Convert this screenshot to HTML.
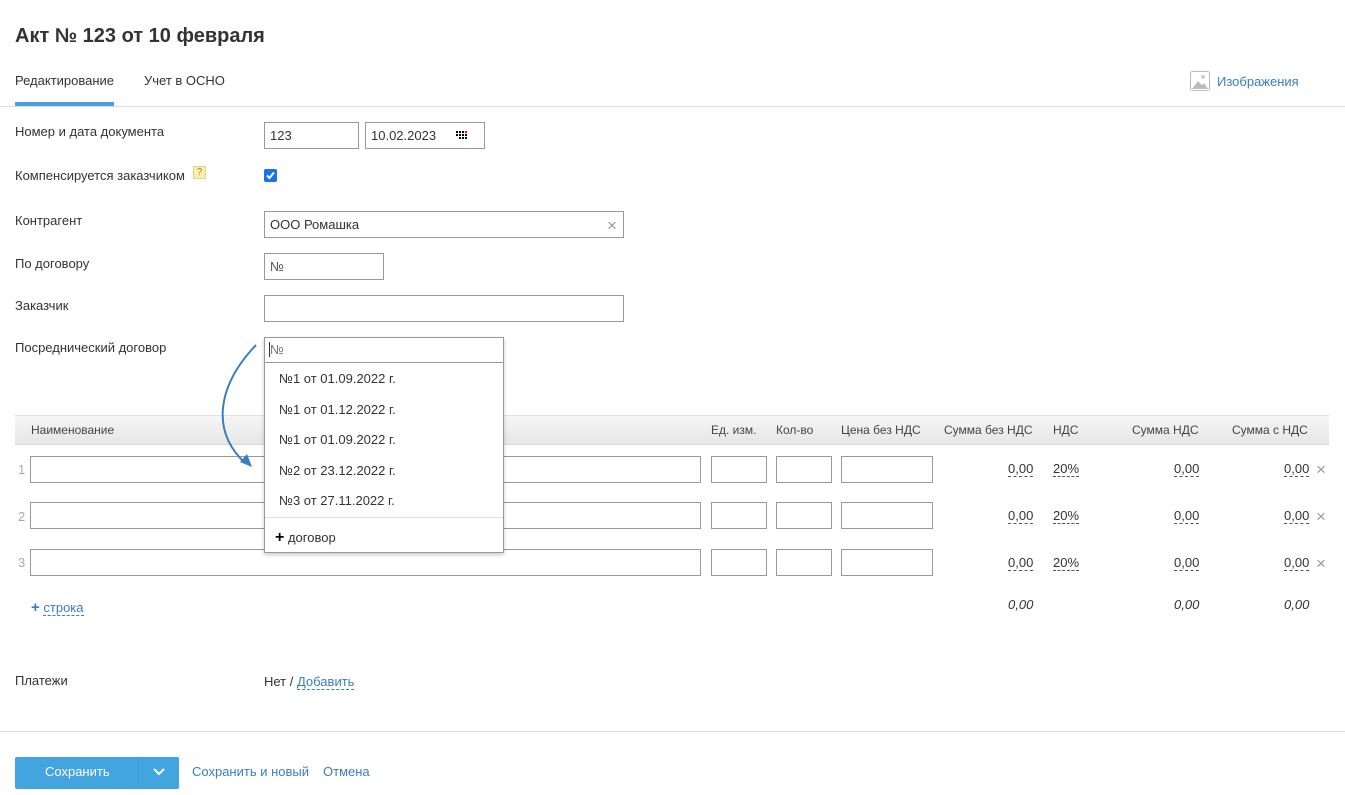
<!DOCTYPE html>
<html><head><meta charset="utf-8"><style>
*{box-sizing:border-box;margin:0;padding:0}
body{width:1345px;height:795px;background:#fff;font-family:"Liberation Sans",Arial,sans-serif;font-size:13px;color:#333;position:relative;overflow:hidden}
.a{position:absolute;white-space:nowrap}
.inp{position:absolute;border:1px solid #999;background:#fff;height:27px;padding-left:5px;line-height:25px;font-size:13px}
.lnk{color:#3a7ebf}
.dash{border-bottom:1px dashed #3a7ebf}
.num{position:absolute;text-align:right;color:#333;border-bottom:1px dashed #555;line-height:15px}
.th{position:absolute;top:423px;color:#444;font-size:12px}
.x{position:absolute;color:#999;font-size:17px}
</style></head><body>
<div class="a" style="left:15px;top:25px;font-size:20px;font-weight:bold;color:#333">Акт № 123 от 10 февраля</div>
<div class="a" style="left:15px;top:73px">Редактирование</div>
<div class="a" style="left:15px;top:102px;width:99px;height:4px;background:#45a0dc"></div>
<div class="a" style="left:144px;top:73px">Учет в ОСНО</div>
<div class="a" style="left:0;top:106px;width:1345px;height:1px;background:#ddd"></div>
<svg class="a" style="left:1190px;top:71px" width="20" height="20" viewBox="0 0 20 20"><rect x="0.5" y="0.5" width="19" height="19" rx="2" fill="#fff" stroke="#bbb"/><path d="M2 18 L8 10 L12 14 L14 12 L18 18Z" fill="#bbb"/><circle cx="13" cy="6" r="2" fill="#ccc"/></svg>
<div class="a lnk" style="left:1217px;top:74px">Изображения</div>

<div class="a" style="left:15px;top:124px">Номер и дата документа</div>
<div class="inp" style="left:264px;top:122px;width:95px">123</div>
<div class="inp" style="left:365px;top:122px;width:120px">10.02.2023</div>
<svg class="a" style="left:456px;top:131px" width="11" height="9"><g fill="#000"><rect x="0" y="0" width="2" height="2"/><rect x="3" y="0" width="2" height="2"/><rect x="6" y="0" width="2" height="2"/><rect x="9" y="0" width="2" height="2" fill="#d00"/><rect x="0" y="3" width="2" height="2"/><rect x="3" y="3" width="2" height="2"/><rect x="6" y="3" width="2" height="2"/><rect x="9" y="3" width="2" height="2"/><rect x="3" y="6" width="2" height="2"/><rect x="6" y="6" width="2" height="2"/><rect x="9" y="6" width="2" height="2"/></g></svg>
<div class="a" style="left:15px;top:168px">Компенсируется заказчиком</div>
<div class="a" style="left:193px;top:166px;width:13px;height:13px;background:#f7eeb0;border:1px solid #e0d38a;font-size:10px;line-height:11px;text-align:center;color:#a08a30">?</div>
<div class="a" style="left:264px;top:169px;width:13px;height:13px;background:#1a73e8;border-radius:2px"><svg width="13" height="13"><path d="M3 6.5 L5.5 9 L10 3.5" stroke="#fff" stroke-width="2" fill="none"/></svg></div>

<div class="a" style="left:15px;top:213px">Контрагент</div>
<div class="inp" style="left:264px;top:211px;width:360px">ООО Ромашка</div>
<div class="x" style="left:607px;top:216px">×</div>
<div class="a" style="left:15px;top:256px">По договору</div>
<div class="inp" style="left:264px;top:253px;width:120px;color:#555">№</div>
<div class="a" style="left:15px;top:298px">Заказчик</div>
<div class="inp" style="left:264px;top:295px;width:360px"></div>
<div class="a" style="left:15px;top:340px">Посреднический договор</div>

<div class="a" style="left:15px;top:415px;width:1314px;height:30px;background:linear-gradient(#f6f6f6,#e6e6e6);border-top:1px solid #e0e0e0;border-bottom:1px solid #d8d8d8"></div>
<div class="th" style="left:31px">Наименование</div>
<div class="th" style="left:711px">Ед. изм.</div>
<div class="th" style="left:776px">Кол-во</div>
<div class="th" style="left:841px">Цена без НДС</div>
<div class="th" style="left:944px">Сумма без НДС</div>
<div class="th" style="left:1053px">НДС</div>
<div class="th" style="left:1132px">Сумма НДС</div>
<div class="th" style="left:1232px">Сумма с НДС</div>

<div class="a" style="left:18px;top:462px;color:#aaa">1</div>
<div class="a" style="left:18px;top:509px;color:#aaa">2</div>
<div class="a" style="left:18px;top:555px;color:#aaa">3</div>
<div class="inp" style="left:30px;top:456px;width:671px"></div><div class="inp" style="left:711px;top:456px;width:56px"></div><div class="inp" style="left:776px;top:456px;width:56px"></div><div class="inp" style="left:841px;top:456px;width:92px"></div>
<div class="inp" style="left:30px;top:502px;width:671px"></div><div class="inp" style="left:711px;top:502px;width:56px"></div><div class="inp" style="left:776px;top:502px;width:56px"></div><div class="inp" style="left:841px;top:502px;width:92px"></div>
<div class="inp" style="left:30px;top:549px;width:671px"></div><div class="inp" style="left:711px;top:549px;width:56px"></div><div class="inp" style="left:776px;top:549px;width:56px"></div><div class="inp" style="left:841px;top:549px;width:92px"></div>

<div class="num" style="left:1008px;top:461px">0,00</div><div class="num" style="left:1053px;top:461px">20%</div><div class="num" style="left:1174px;top:461px">0,00</div><div class="num" style="left:1284px;top:461px">0,00</div><div class="x" style="left:1316px;top:460px">×</div>
<div class="num" style="left:1008px;top:508px">0,00</div><div class="num" style="left:1053px;top:508px">20%</div><div class="num" style="left:1174px;top:508px">0,00</div><div class="num" style="left:1284px;top:508px">0,00</div><div class="x" style="left:1316px;top:507px">×</div>
<div class="num" style="left:1008px;top:555px">0,00</div><div class="num" style="left:1053px;top:555px">20%</div><div class="num" style="left:1174px;top:555px">0,00</div><div class="num" style="left:1284px;top:555px">0,00</div><div class="x" style="left:1316px;top:554px">×</div>
<div class="a" style="left:1008px;top:597px;font-style:italic">0,00</div>
<div class="a" style="left:1174px;top:597px;font-style:italic">0,00</div>
<div class="a" style="left:1284px;top:597px;font-style:italic">0,00</div>
<div class="a lnk" style="left:31px;top:599px"><b style="font-size:15px">+</b> <span class="dash">строка</span></div>

<div class="a" style="left:15px;top:673px">Платежи</div>
<div class="a" style="left:264px;top:674px">Нет / <span class="lnk dash">Добавить</span></div>
<div class="a" style="left:0;top:731px;width:1345px;height:1px;background:#ddd"></div>
<div class="a" style="left:15px;top:757px;width:164px;height:32px;background:#42a5e0;border-radius:2px"></div>
<div class="a" style="left:138px;top:757px;width:1px;height:32px;background:#3b9bd4"></div>
<div class="a" style="left:45px;top:764px;color:#fff">Сохранить</div>
<svg class="a" style="left:153px;top:768px" width="12" height="8"><path d="M1 1 L6 6 L11 1" stroke="#fff" stroke-width="2" fill="none"/></svg>
<div class="a lnk" style="left:192px;top:764px">Сохранить и новый</div>
<div class="a lnk" style="left:323px;top:764px">Отмена</div>

<div class="a" style="left:264px;top:337px;width:240px;height:216px;background:#fff;border:1px solid #999;box-shadow:0 2px 4px rgba(0,0,0,.2)"></div>
<div class="a" style="left:264px;top:337px;width:240px;height:26px;border-bottom:1px solid #999"></div>
<div class="a" style="left:269px;top:342px;width:1px;height:15px;background:#333"></div>
<div class="a" style="left:270px;top:342px;color:#777">№</div>
<div class="a" style="left:279px;top:371px">№1 от 01.09.2022 г.</div>
<div class="a" style="left:279px;top:402px">№1 от 01.12.2022 г.</div>
<div class="a" style="left:279px;top:432px">№1 от 01.09.2022 г.</div>
<div class="a" style="left:279px;top:463px">№2 от 23.12.2022 г.</div>
<div class="a" style="left:279px;top:493px">№3 от 27.11.2022 г.</div>
<div class="a" style="left:265px;top:517px;width:238px;height:1px;background:#ddd"></div>
<div class="a" style="left:275px;top:529px"><b style="font-size:16px;color:#000">+</b> договор</div>
<svg class="a" style="left:200px;top:335px" width="70" height="140"><path d="M56 10 C18 50 10 95 45 128" stroke="#3a7ebf" stroke-width="2" fill="none"/><path d="M52 132 L40 127 L47 119Z" fill="#3a7ebf"/></svg>
</body></html>
